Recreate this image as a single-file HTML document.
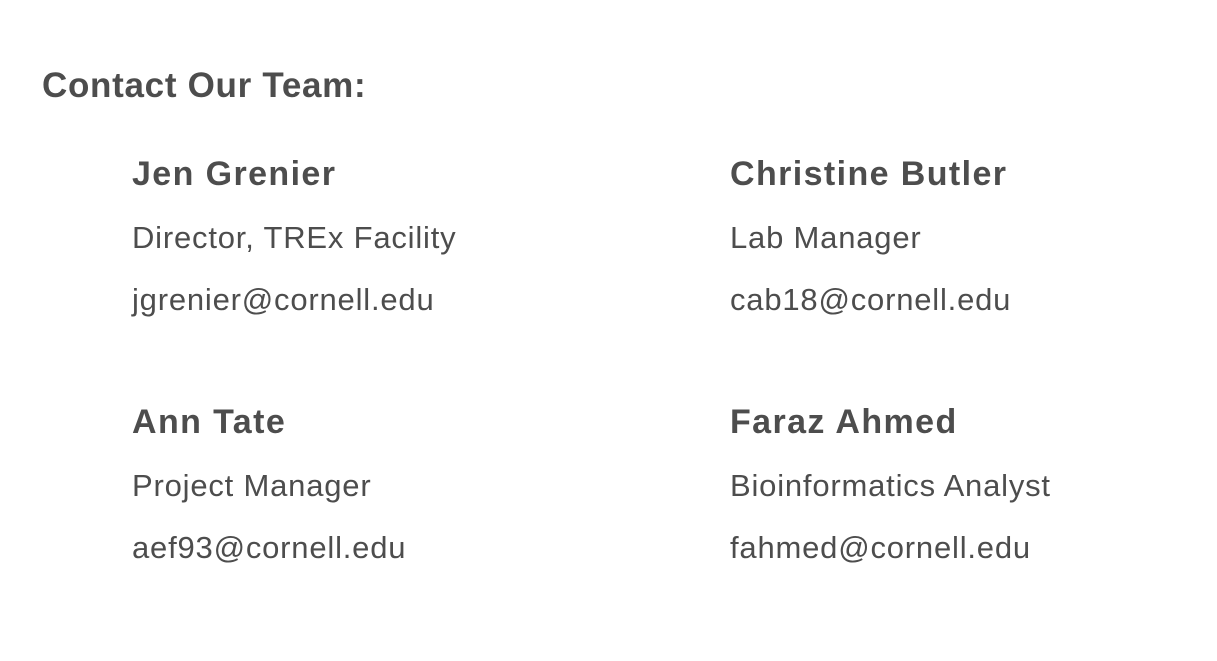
<!DOCTYPE html>
<html><head><meta charset="utf-8"><style>
html,body{margin:0;padding:0;background:#fff;}
body{width:1217px;height:661px;position:relative;overflow:hidden;font-family:"Liberation Sans",sans-serif;color:#4d4d4d;}
.t{position:absolute;white-space:nowrap;line-height:1;}
.h{font-size:35px;font-weight:bold;letter-spacing:0.7px;}
.n{font-size:34px;font-weight:bold;letter-spacing:1.4px;}
.r{font-size:31px;letter-spacing:0.8px;}
</style></head><body>
<div class="t h" style="left:42px;top:68px">Contact Our Team:</div>
<div class="t n" style="left:132px;top:157px">Jen Grenier</div>
<div class="t r" style="left:132px;top:222px">Director, TREx Facility</div>
<div class="t r" style="left:132px;top:284px">jgrenier@cornell.edu</div>
<div class="t n" style="left:730px;top:157px">Christine Butler</div>
<div class="t r" style="left:730px;top:222px">Lab Manager</div>
<div class="t r" style="left:730px;top:284px">cab18@cornell.edu</div>
<div class="t n" style="left:132px;top:405px">Ann Tate</div>
<div class="t r" style="left:132px;top:470px">Project Manager</div>
<div class="t r" style="left:132px;top:532px">aef93@cornell.edu</div>
<div class="t n" style="left:730px;top:405px">Faraz Ahmed</div>
<div class="t r" style="left:730px;top:470px">Bioinformatics Analyst</div>
<div class="t r" style="left:730px;top:532px">fahmed@cornell.edu</div>
</body></html>
